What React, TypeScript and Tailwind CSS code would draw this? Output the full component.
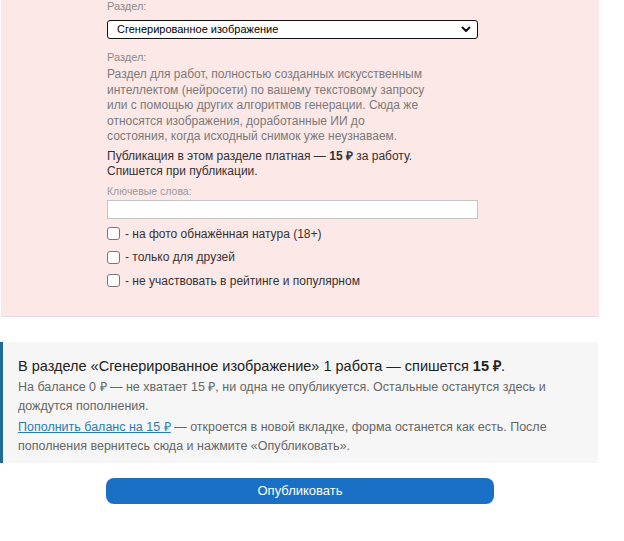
import React from "react";

const font = { fontFamily: '"Liberation Sans", Arial, sans-serif' };

function Checkbox({ label }: { label: string }) {
  return (
    <label className="flex items-center h-[16px]">
      <span className="w-[13px] h-[13px] border border-[#767676] rounded-[3px] bg-white shrink-0" />
      <span className="ml-[5px] text-[12px] leading-[16px] text-[#333]">{label}</span>
    </label>
  );
}

export default function App() {
  return (
    <div className="w-[624px] h-[541px] bg-white overflow-hidden" style={font}>
      {/* section settings */}
      <div className="ml-[1px] w-[598px] h-[317px] bg-[#fde8e8] border-b border-[#dedede] pl-[106px]">
        <div className="text-[11px] leading-[13px] text-[#8a8a8a] pt-[0px]">Раздел:</div>
        <div className="mt-[7px] w-[371px] h-[19px] border-[1.5px] border-[#111] rounded-[3px] bg-white flex items-center justify-between pl-[9px] pr-[6px]">
          <span className="text-[11px] leading-[13px] text-black">Сгенерированное изображение</span>
          <svg width="10" height="7" viewBox="0 0 10 7">
            <path d="M1.5 1.5 L5 5 L8.5 1.5" fill="none" stroke="#111" strokeWidth="2" strokeLinecap="round" strokeLinejoin="round" />
          </svg>
        </div>
        <div className="mt-[12px] text-[11px] leading-[13px] text-[#8a8a8a]">Раздел:</div>
        <p className="mt-[3px] text-[12px] leading-[15.5px] text-[#7a7a7a]">
          Раздел для работ, полностью созданных искусственным
          <br />
          интеллектом (нейросети) по вашему текстовому запросу
          <br />
          или с помощью других алгоритмов генерации. Сюда же
          <br />
          относятся изображения, доработанные ИИ до
          <br />
          состояния, когда исходный снимок уже неузнаваем.
        </p>
        <p className="mt-[4px] text-[12px] leading-[15px] text-[#333]">
          Публикация в этом разделе платная — <b>15 ₽</b> за работу.
          <br />
          Спишется при публикации.
        </p>
        <div className="mt-[6px] text-[10.5px] leading-[12px] text-[#999]">Ключевые слова:</div>
        <div className="mt-[3px] w-[371px] h-[19px] border border-[#c4c4c4] bg-white" />
        <div className="mt-[7px] flex flex-col gap-[7.5px]">
          <Checkbox label="- на фото обнажённая натура (18+)" />
          <Checkbox label="- только для друзей" />
          <Checkbox label="- не участвовать в рейтинге и популярном" />
        </div>
      </div>

      {/* payment notice */}
      <div className="mt-[25px] w-[598px] h-[121px] bg-[#f6f6f6] border-l-[3px] border-[#1f6a96] pl-[15px] pt-[15px]">
        <p className="text-[14.5px] leading-[19px] text-[#222]">
          В разделе «Сгенерированное изображение» 1 работа — спишется <b>15 ₽</b>.
        </p>
        <p className="mt-[2px] text-[12.5px] leading-[19px] text-[#666]">
          На балансе 0 ₽ — не хватает 15 ₽, ни одна не опубликуется. Остальные останутся здесь и
          <br />
          дождутся пополнения.
        </p>
        <p className="mt-[2px] text-[12.5px] leading-[19px] text-[#666]">
          <a className="text-[#2b7cb5] underline">Пополнить баланс на 15 ₽</a> — откроется в новой вкладке, форма останется как есть. После
          <br />
          пополнения вернитесь сюда и нажмите «Опубликовать».
        </p>
      </div>

      <div className="mt-[15px] pl-[106px]">
        <button className="w-[388px] h-[26px] rounded-[8px] bg-[#1a70c4] text-white text-[13px] leading-[26px] text-center">
          Опубликовать
        </button>
      </div>
    </div>
  );
}
